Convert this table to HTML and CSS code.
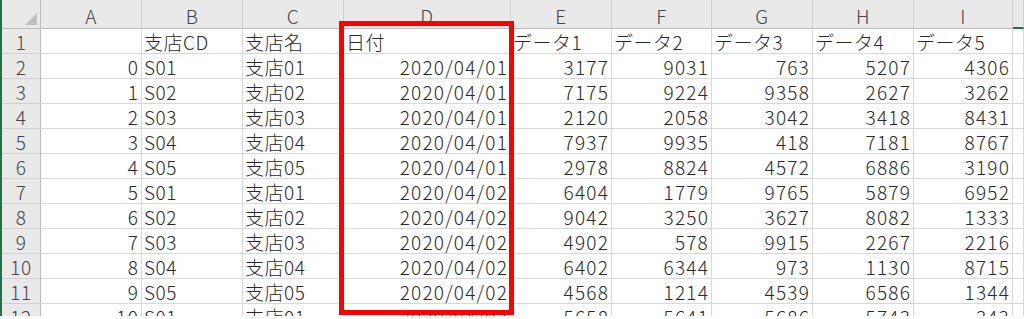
FILE: index.html
```html
<!DOCTYPE html>
<html lang="ja">
<head>
<meta charset="utf-8">
<title>Sheet</title>
<link rel="stylesheet" href="styles.css">
</head>
<body>
<div class="wrap">
  <div class="sheet">
    <div class="corner"><span class="tri"></span></div>
    <div class="ch">A</div><div class="ch">B</div><div class="ch">C</div><div class="ch">D</div><div class="ch">E</div><div class="ch">F</div><div class="ch">G</div><div class="ch">H</div><div class="ch">I</div><div class="ch sel"></div>

    <div class="rh">1</div><div class="c"></div><div class="c">支店CD</div><div class="c">支店名</div><div class="c">日付</div><div class="c">データ1</div><div class="c">データ2</div><div class="c">データ3</div><div class="c">データ4</div><div class="c">データ5</div><div class="c"></div>

    <div class="rh">2</div><div class="c n">0</div><div class="c">S01</div><div class="c">支店01</div><div class="c n">2020/04/01</div><div class="c n">3177</div><div class="c n">9031</div><div class="c n">763</div><div class="c n">5207</div><div class="c n">4306</div><div class="c"></div>

    <div class="rh">3</div><div class="c n">1</div><div class="c">S02</div><div class="c">支店02</div><div class="c n">2020/04/01</div><div class="c n">7175</div><div class="c n">9224</div><div class="c n">9358</div><div class="c n">2627</div><div class="c n">3262</div><div class="c"></div>

    <div class="rh">4</div><div class="c n">2</div><div class="c">S03</div><div class="c">支店03</div><div class="c n">2020/04/01</div><div class="c n">2120</div><div class="c n">2058</div><div class="c n">3042</div><div class="c n">3418</div><div class="c n">8431</div><div class="c"></div>

    <div class="rh">5</div><div class="c n">3</div><div class="c">S04</div><div class="c">支店04</div><div class="c n">2020/04/01</div><div class="c n">7937</div><div class="c n">9935</div><div class="c n">418</div><div class="c n">7181</div><div class="c n">8767</div><div class="c"></div>

    <div class="rh">6</div><div class="c n">4</div><div class="c">S05</div><div class="c">支店05</div><div class="c n">2020/04/01</div><div class="c n">2978</div><div class="c n">8824</div><div class="c n">4572</div><div class="c n">6886</div><div class="c n">3190</div><div class="c"></div>

    <div class="rh">7</div><div class="c n">5</div><div class="c">S01</div><div class="c">支店01</div><div class="c n">2020/04/02</div><div class="c n">6404</div><div class="c n">1779</div><div class="c n">9765</div><div class="c n">5879</div><div class="c n">6952</div><div class="c"></div>

    <div class="rh">8</div><div class="c n">6</div><div class="c">S02</div><div class="c">支店02</div><div class="c n">2020/04/02</div><div class="c n">9042</div><div class="c n">3250</div><div class="c n">3627</div><div class="c n">8082</div><div class="c n">1333</div><div class="c"></div>

    <div class="rh">9</div><div class="c n">7</div><div class="c">S03</div><div class="c">支店03</div><div class="c n">2020/04/02</div><div class="c n">4902</div><div class="c n">578</div><div class="c n">9915</div><div class="c n">2267</div><div class="c n">2216</div><div class="c"></div>

    <div class="rh">10</div><div class="c n">8</div><div class="c">S04</div><div class="c">支店04</div><div class="c n">2020/04/02</div><div class="c n">6402</div><div class="c n">6344</div><div class="c n">973</div><div class="c n">1130</div><div class="c n">8715</div><div class="c"></div>

    <div class="rh">11</div><div class="c n">9</div><div class="c">S05</div><div class="c">支店05</div><div class="c n">2020/04/02</div><div class="c n">4568</div><div class="c n">1214</div><div class="c n">4539</div><div class="c n">6586</div><div class="c n">1344</div><div class="c"></div>

    <div class="rh">12</div><div class="c n">10</div><div class="c">S01</div><div class="c">支店01</div><div class="c n">2020/04/03</div><div class="c n">5658</div><div class="c n">5641</div><div class="c n">5686</div><div class="c n">5743</div><div class="c n">343</div><div class="c"></div>
  </div>
  <div class="highlight"></div>
</div>
</body>
</html>
```

FILE: styles.css
```css
html, body {
  margin: 0;
  padding: 0;
  background: #ffffff;
}

.wrap {
  position: relative;
  width: 1024px;
  height: 319px;
  overflow: hidden;
}

.sheet {
  display: grid;
  grid-template-columns: 39px 101px 101px 101px 167px 101px 100px 101px 101px 99px 1fr;
  grid-template-rows: 29px repeat(12, 25px);
  height: 316px;
  overflow: hidden;
  border-left: 2px solid #217346;
  font-family: "Noto Sans CJK JP", "Liberation Sans", sans-serif;
  font-weight: 300;
  font-size: 19px;
  letter-spacing: 0.5px;
  color: #2a2a2a;
  box-sizing: border-box;
}

.corner,
.ch,
.rh,
.c {
  box-sizing: border-box;
  display: flex;
  align-items: center;
  white-space: nowrap;
  line-height: 1.2;
}

.corner {
  position: relative;
  background: #e9e9e9;
  border-right: 1px solid #bcbcbc;
  border-bottom: 1px solid #bcbcbc;
}

.tri {
  position: absolute;
  right: 3px;
  bottom: 3px;
  width: 0;
  height: 0;
  border-left: 12px solid transparent;
  border-bottom: 12px solid #bfbfbf;
}

.ch {
  justify-content: center;
  background: #e9e9e9;
  color: #444444;
  border-right: 1px solid #d0d0d0;
  border-bottom: 1px solid #bcbcbc;
  padding-top: 4px;
}

.ch.sel {
  border-bottom: 2px solid #217346;
}

.rh {
  justify-content: center;
  background: #e9e9e9;
  color: #444444;
  border-right: 1px solid #bcbcbc;
  border-bottom: 1px solid #d0d0d0;
  padding-top: 3px;
}

.c {
  background: #ffffff;
  border-right: 1px solid #d9d9d9;
  border-bottom: 1px solid #d9d9d9;
  padding: 3px 3px 0 2px;
}

.c.n {
  justify-content: flex-end;
  letter-spacing: 1.2px;
  padding-right: 2px;
}

.highlight {
  position: absolute;
  left: 339px;
  top: 21px;
  width: 175px;
  height: 294px;
  box-sizing: border-box;
  border: 5px solid #ff0000;
  pointer-events: none;
}
```
